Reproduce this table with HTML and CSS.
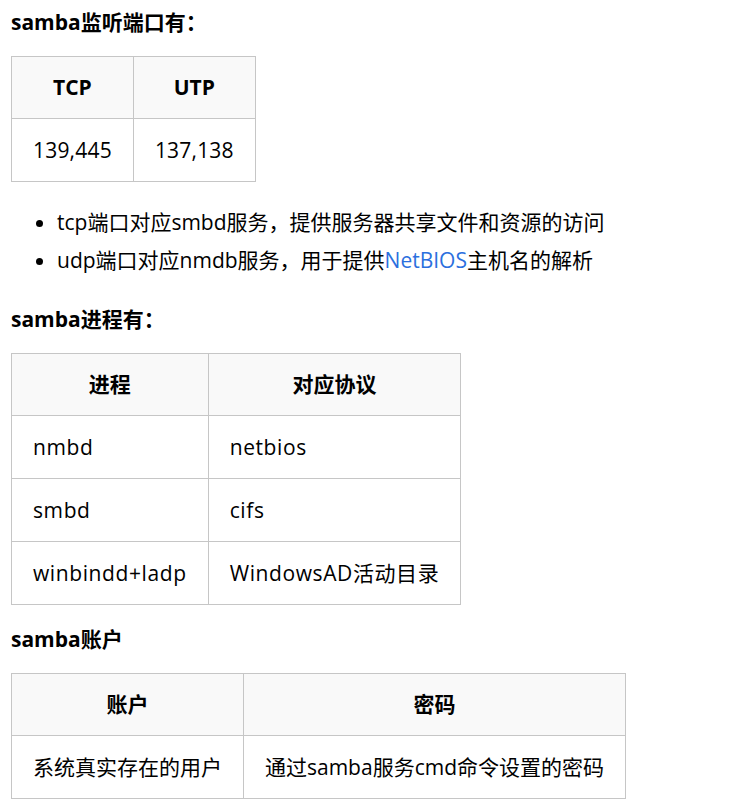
FILE: index.html
```html
<!DOCTYPE html>
<html>
<head>
    <meta charset="utf-8">
    <link rel="stylesheet" href="styles.css">
</head>
<body>
    <div class="doc">
        <p class="section-title"><strong>samba监听端口有：</strong></p>
        <table class="grid grid-center ports">
            <thead>
                <tr><th>TCP</th><th>UTP</th></tr>
            </thead>
            <tbody>
                <tr><td>139,445</td><td>137,138</td></tr>
            </tbody>
        </table>

        <ul class="notes">
            <li>tcp端口对应smbd服务，提供服务器共享文件和资源的访问</li>
            <li>udp端口对应nmdb服务，用于提供<a href="#">NetBIOS</a>主机名的解析</li>
        </ul>

        <p class="section-title"><strong>samba进程有：</strong></p>
        <table class="grid procs">
            <thead>
                <tr><th>进程</th><th>对应协议</th></tr>
            </thead>
            <tbody>
                <tr><td>nmbd</td><td>netbios</td></tr>
                <tr><td>smbd</td><td>cifs</td></tr>
                <tr><td>winbindd+ladp</td><td>WindowsAD活动目录</td></tr>
            </tbody>
        </table>

        <p class="section-title"><strong>samba账户</strong></p>
        <table class="grid grid-center accounts">
            <thead>
                <tr><th>账户</th><th>密码</th></tr>
            </thead>
            <tbody>
                <tr><td>系统真实存在的用户</td><td>通过samba服务cmd命令设置的密码</td></tr>
            </tbody>
        </table>
    </div>
</body>
</html>
```

FILE: styles.css
```css
body {
    font-family: 'Open Sans', 'Noto Sans CJK SC', sans-serif;
    font-size: 21px;
    color: #000;
    background: #fff;
    margin: 0;
}

.doc {
    padding: 5px 11px 0 11px;
}

.section-title {
    margin: 0 0 17px 0;
    line-height: 34px;
}

.section-title strong {
    font-weight: 700;
}

.grid {
    border-collapse: collapse;
    margin: 0;
}

.grid th,
.grid td {
    border: 1px solid #c6c6c6;
    padding: 18px 21px;
    line-height: 26px;
    white-space: nowrap;
    text-align: left;
}

.grid th {
    background: #f9f9f9;
    font-weight: 700;
    text-align: center;
    line-height: 25px;
}

.grid-center td {
    text-align: center;
}

.ports td {
    letter-spacing: 0.2px;
}

.notes {
    margin: 21px 0 23px 0;
    padding-left: 46px;
}

.notes li {
    line-height: 38px;
}

.notes a {
    color: #2b6fde;
    text-decoration: none;
}

.procs {
    margin-bottom: 17px;
}

.procs td {
    letter-spacing: 0.6px;
}
```
